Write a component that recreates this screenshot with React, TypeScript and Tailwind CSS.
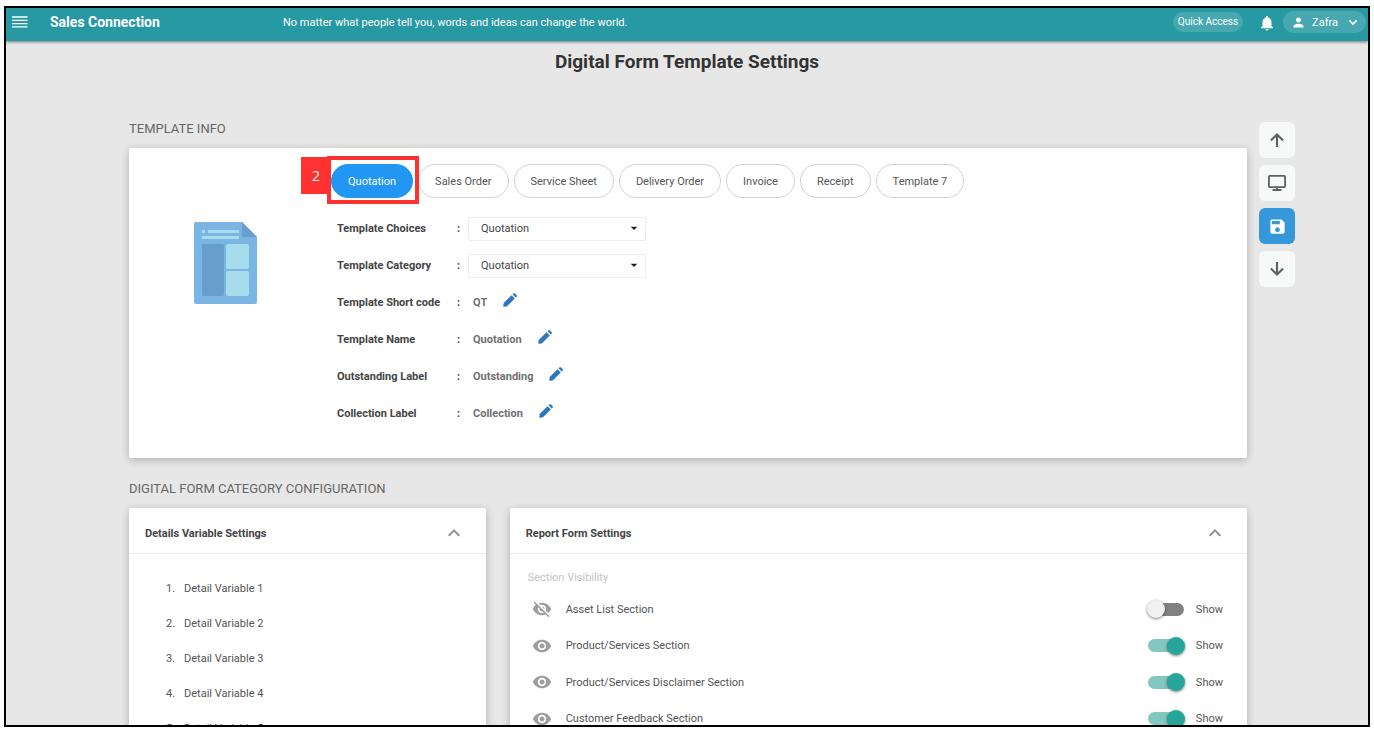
import React, { useState } from 'react';
import {
  MdArrowDropDown,
  MdKeyboardArrowUp,
  MdNotifications,
  MdPerson,
  MdSave,
  MdVisibility,
  MdVisibilityOff,
} from 'react-icons/md';

interface EditableField {
  label: string;
  value: string;
}

interface Section {
  name: string;
  visible: boolean;
}

const templates = ['Quotation', 'Sales Order', 'Service Sheet', 'Delivery Order', 'Invoice', 'Receipt', 'Template 7'];

const selectFields = ['Template Choices', 'Template Category'];

const editableFields: EditableField[] = [
  { label: 'Template Short code', value: 'QT' },
  { label: 'Template Name', value: 'Quotation' },
  { label: 'Outstanding Label', value: 'Outstanding' },
  { label: 'Collection Label', value: 'Collection' },
];

const detailVariables = [1, 2, 3, 4, 5];

const initialSections: Section[] = [
  { name: 'Asset List Section', visible: false },
  { name: 'Product/Services Section', visible: true },
  { name: 'Product/Services Disclaimer Section', visible: true },
  { name: 'Customer Feedback Section', visible: true },
];

const MenuIcon = () => (
  <svg width="16" height="12" viewBox="0 0 16 12" stroke="currentColor" strokeWidth="1.3">
    <path d="M0 1h15.5M0 4.3h15.5M0 7.6h15.5M0 10.9h15.5" />
  </svg>
);

const ChevronDownIcon = () => (
  <svg width="14" height="14" viewBox="0 0 14 14" fill="none" stroke="currentColor" strokeWidth="1.7">
    <path d="M3.4 5.4L7 9l3.6-3.6" />
  </svg>
);

const PencilIcon = () => (
  <svg width="14" height="14" viewBox="0 0 14 14" fill="currentColor">
    <path d="M8.5 2.2l3.3 3.3-7.3 7.3q-.5.5-1.1.6l-2.4.3q-.8 0-.7-.7l.3-2.4q.1-.7.6-1.1z" />
    <path d="M9.5 1.3l.8-.8q.8-.8 1.6 0l1.6 1.6q.8.8 0 1.6l-.8.8z" />
  </svg>
);

const MonitorIcon = () => (
  <svg width="18" height="16" viewBox="0 0 18 16" fill="none" stroke="currentColor" strokeWidth="1.8">
    <rect x="0.9" y="0.9" width="16.2" height="11.2" rx="0.8" />
    <path d="M9 12v2.4M4.5 15h9" />
  </svg>
);

const ArrowUpIcon = () => (
  <svg width="14" height="14" viewBox="0 0 14 14" fill="none" stroke="currentColor" strokeWidth="2.1">
    <path d="M7 14V1.6M0.9 7.4L7 1.5l6.1 5.9" />
  </svg>
);

const ArrowDownIcon = () => (
  <svg width="14" height="14" viewBox="0 0 14 14" fill="none" stroke="currentColor" strokeWidth="2.1">
    <path d="M7 0v12.4M0.9 6.6L7 12.5l6.1-5.9" />
  </svg>
);

const DocumentIcon = () => (
  <svg width="63" height="82" viewBox="0 0 63 82">
    <path d="M2 0h46l15 15v65a2 2 0 0 1-2 2H2a2 2 0 0 1-2-2V2a2 2 0 0 1 2-2z" fill="#7bb5e4" />
    <path d="M48 0l15 15H50a2 2 0 0 1-2-2z" fill="#689ecb" />
    <rect x="8" y="8" width="3" height="3" fill="#a6dceb" />
    <rect x="14" y="8" width="31" height="3" fill="#a6dceb" />
    <rect x="8" y="14" width="37" height="3" fill="#a6dceb" />
    <rect x="8" y="22" width="22" height="52" rx="2" fill="#689ecb" />
    <rect x="32" y="22" width="23" height="25" rx="2" fill="#a6dceb" />
    <rect x="32" y="49" width="23" height="25" rx="2" fill="#a6dceb" />
  </svg>
);

const CardHeader = ({ title }: { title: string }) => (
  <div className="flex h-[46px] items-center justify-between border-b border-[#ececec] pr-5 pl-4">
    <h3 className="pt-[5px] text-[11px] leading-[17px] font-bold text-[#444]">{title}</h3>
    <button type="button" aria-label={`Collapse ${title}`} className="pt-1 text-[#8f8f8f]">
      <MdKeyboardArrowUp size={24} />
    </button>
  </div>
);

const App: React.FC = () => {
  const [activeTemplate, setActiveTemplate] = useState('Quotation');
  const [sections, setSections] = useState<Section[]>(initialSections);

  const toggleSection = (name: string) => {
    setSections(sections.map((s) => (s.name === name ? { ...s, visible: !s.visible } : s)));
  };

  return (
    <div className="flex h-screen flex-col bg-white px-1 pt-[6px] pb-[3px] font-['Roboto',sans-serif]">
      <div className="flex min-h-0 flex-1 flex-col overflow-hidden border-2 border-black bg-[#e7e7e7]">
        {/* Top bar */}
        <header className="z-10 flex h-[33px] shrink-0 items-center bg-[#2799a3] pr-[2px] pb-[5px] pl-[6px] text-white shadow-[0_1px_3px_rgba(0,0,0,0.5)]">
          <button type="button" aria-label="Menu" className="w-[38px]">
            <MenuIcon />
          </button>
          <a href="#" className="w-[233px] text-[14px] leading-[18px] font-bold">
            Sales Connection
          </a>
          <p className="flex-1 text-[11px] leading-[17px]">
            No matter what people tell you, words and ideas can change the world.
          </p>
          <button type="button" className="h-5 rounded-full bg-white/15 px-[5px] text-[10px] leading-4">
            Quick Access
          </button>
          <button type="button" aria-label="Notifications" className="mr-[7px] ml-[15px] pt-[2px]">
            <MdNotifications size={18} />
          </button>
          <button type="button" className="flex h-[22px] items-center rounded-full bg-white/15 pr-[6px] pl-2 text-[11px] leading-[17px]">
            <MdPerson size={15} />
            <span className="mr-2 ml-[6px]">Zafra</span>
            <ChevronDownIcon />
          </button>
        </header>

        <h1 className="mt-[7px] shrink-0 text-center text-[19px] leading-7 font-bold text-[#333]">
          Digital Form Template Settings
        </h1>

        <div className="mt-[43px] flex items-start gap-3 pr-[73px] pl-[123px]">
          <main className="min-w-0 flex-1">
            {/* Template info */}
            <h2 className="mb-[9px] text-[13px] leading-5 text-[#666]">TEMPLATE INFO</h2>
            <section className="flex rounded-xs bg-white pt-4 pb-[26px] shadow-[0_2px_8px_rgba(0,0,0,0.25)]">
              <div className="w-[202px] shrink-0 pt-[58px] pl-[65px]">
                <DocumentIcon />
              </div>
              <div className="flex-1">
                <div className="flex gap-[5px]">
                  {templates.map((name) => (
                    <div key={name} className="relative">
                      <button
                        type="button"
                        onClick={() => setActiveTemplate(name)}
                        className={`h-[34px] rounded-full border px-4 text-[11px] leading-[17px] ${
                          name === activeTemplate
                            ? 'border-[#2196f3] bg-[#2196f3] text-white'
                            : 'border-[#d2d2d2] bg-white text-[#555]'
                        }`}
                      >
                        {name}
                      </button>
                      {/* Step marker */}
                      {name === 'Quotation' && (
                        <>
                          <div className="pointer-events-none absolute -top-2 -right-[6px] -bottom-[6px] -left-1 z-10 border-4 border-[#ff3131]" />
                          <div className="absolute -top-[7px] -left-[30px] flex h-[37px] w-[30px] items-center justify-center bg-[#ff3131] font-['Open_Sans',sans-serif] text-[14px] leading-5 text-white">
                            2
                          </div>
                        </>
                      )}
                    </div>
                  ))}
                </div>

                <div className="mt-3 pl-[6px] text-[11px] leading-[17px] font-bold">
                  {selectFields.map((label) => (
                    <div key={label} className="flex h-[37px] items-center text-[#444]">
                      <label htmlFor={label} className="w-[120px]">
                        {label}
                      </label>
                      <span className="w-[11px]">:</span>
                      <div className="relative">
                        <select
                          id={label}
                          className="h-6 w-[178px] appearance-none rounded-xs border border-[#ececec] bg-white px-3 font-normal text-[#444]"
                        >
                          <option>Quotation</option>
                        </select>
                        <MdArrowDropDown size={16} className="pointer-events-none absolute top-[3px] right-1 text-[#222]" />
                      </div>
                    </div>
                  ))}
                  {editableFields.map((field) => (
                    <div key={field.label} className="flex h-[37px] items-center text-[#444]">
                      <span className="w-[120px]">{field.label}</span>
                      <span className="w-4">:</span>
                      <span className="text-[#707070]">{field.value}</span>
                      <button type="button" aria-label={`Edit ${field.label}`} className="mb-[6px] ml-4 text-[#2e77bd]">
                        <PencilIcon />
                      </button>
                    </div>
                  ))}
                </div>
              </div>
            </section>

            {/* Category configuration */}
            <h2 className="mt-[21px] mb-[9px] text-[13px] leading-5 text-[#666]">DIGITAL FORM CATEGORY CONFIGURATION</h2>
            <div className="grid grid-cols-3 gap-6">
              <section className="rounded-xs bg-white shadow-[0_2px_8px_rgba(0,0,0,0.25)]">
                <CardHeader title="Details Variable Settings" />
                <ol className="pt-[17px] pl-[37px] text-[11px] leading-[17px] text-[#555]">
                  {detailVariables.map((n) => (
                    <li key={n} className="flex h-[35px] items-center">
                      <span className="w-[18px]">{n}.</span>
                      <span>Detail Variable {n}</span>
                    </li>
                  ))}
                </ol>
              </section>

              <section className="col-span-2 rounded-xs bg-white shadow-[0_2px_8px_rgba(0,0,0,0.25)]">
                <CardHeader title="Report Form Settings" />
                <div className="pt-[15px] pr-6 pl-[18px] text-[11px] leading-[17px] text-[#555]">
                  <p className="mb-[5px] text-[#c4c4c4]">Section Visibility</p>
                  <div className="grid h-[146px] grid-rows-4">
                    {sections.map((section) => (
                      <div key={section.name} className="flex items-center pl-1">
                        <span className="w-[34px] text-[#9e9e9e]">
                          {section.visible ? <MdVisibility size={20} /> : <MdVisibilityOff size={20} />}
                        </span>
                        <span className="flex-1">{section.name}</span>
                        <label className="flex items-center gap-3">
                          <input
                            type="checkbox"
                            checked={section.visible}
                            onChange={() => toggleSection(section.name)}
                            className="flex h-[13px] w-9 appearance-none items-center rounded-full bg-[#818181] before:-ml-px before:size-[18px] before:shrink-0 before:rounded-full before:bg-[#f1f1f1] before:shadow-[0_1px_3px_rgba(0,0,0,0.5)] checked:bg-[#84c7c1] checked:before:ml-[19px] checked:before:bg-[#26a69a]"
                          />
                          Show
                        </label>
                      </div>
                    ))}
                  </div>
                </div>
              </section>
            </div>
          </main>

          {/* Side actions */}
          <nav className="flex flex-col gap-[7px] pt-[3px] text-[#606060]">
            <button type="button" aria-label="Scroll to top" className="flex size-9 items-center justify-center rounded-md bg-[#f7f9f9]">
              <ArrowUpIcon />
            </button>
            <button type="button" aria-label="Preview" className="flex size-9 items-center justify-center rounded-md bg-[#f7f9f9]">
              <MonitorIcon />
            </button>
            <button type="button" aria-label="Save" className="flex size-9 items-center justify-center rounded-md bg-[#3498db] text-white">
              <MdSave size={19} />
            </button>
            <button type="button" aria-label="Scroll to bottom" className="flex size-9 items-center justify-center rounded-md bg-[#f7f9f9]">
              <ArrowDownIcon />
            </button>
          </nav>
        </div>
      </div>
    </div>
  );
};

export default App;
